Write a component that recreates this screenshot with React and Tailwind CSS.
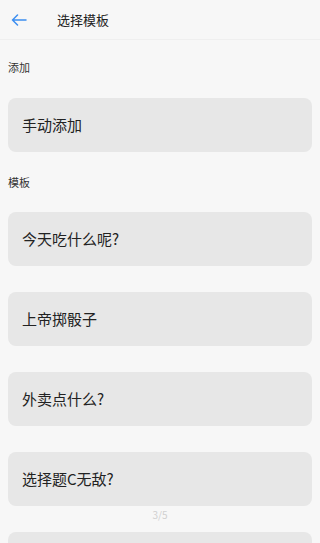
import React from "react";

const templates = ["今天吃什么呢?", "上帝掷骰子", "外卖点什么?", "选择题C无敌?", "抛硬币"];

function SectionLabel({ children, className }) {
  return (
    <div className={`px-2 text-[11px] leading-[14px] text-[#333] ${className}`}>
      {children}
    </div>
  );
}

function Card({ children }) {
  return (
    <div className="mx-2 h-[54px] rounded-lg bg-[#e7e7e7] flex items-center px-[14px] text-[15px] text-[#222] shrink-0">
      {children}
    </div>
  );
}

export default function App() {
  return (
    <div
      className="relative w-[320px] h-[543px] overflow-hidden bg-[#f7f7f7]"
      style={{ fontFamily: '"Noto Sans CJK SC", "Noto Sans", sans-serif' }}
    >
      {/* Header */}
      <div className="h-10 flex items-center border-b border-[#efefef] bg-[#f7f7f7]">
        <div className="w-[57px] flex items-center pl-[11px]">
          <svg width="16" height="12" viewBox="0 0 16 12" fill="none">
            <path d="M15 6H1.5M6.5 1L1.5 6l5 5" stroke="#3d8ef0" strokeWidth="1.5" strokeLinecap="round" strokeLinejoin="round" />
          </svg>
        </div>
        <div className="text-[13px] text-[#222]">选择模板</div>
      </div>

      <SectionLabel className="mt-5 mb-6">添加</SectionLabel>
      <Card>手动添加</Card>

      <SectionLabel className="mt-[23px] mb-[23px]">模板</SectionLabel>
      <div className="flex flex-col gap-[26px]">
        {templates.map((t) => (
          <Card key={t}>{t}</Card>
        ))}
      </div>

      {/* scroll position indicator */}
      <div className="absolute left-0 right-0 top-[507px] text-center text-[10px] text-[#d0d0d0]">
        3/5
      </div>
    </div>
  );
}
